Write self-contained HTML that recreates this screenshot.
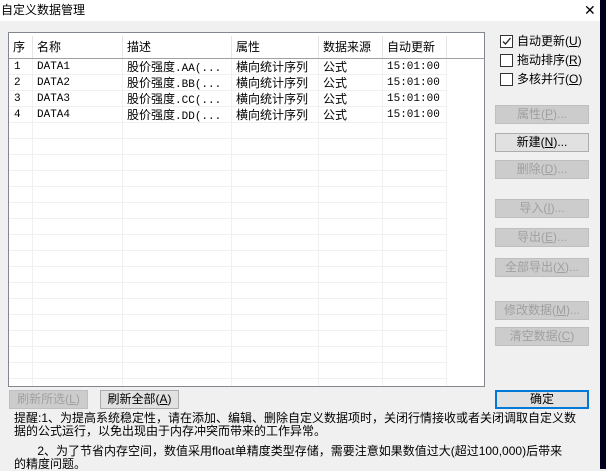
<!DOCTYPE html>
<html><head><meta charset="utf-8"><style>
*{margin:0;padding:0;box-sizing:border-box}
body{width:606px;height:469px;overflow:hidden;background:#f0f0f0;font-family:"Liberation Sans","Noto Sans CJK SC",sans-serif;font-size:12px;color:#000;position:relative}
.abs{position:absolute}
.title{left:0;top:0;width:600px;height:21px;background:#fff}
.title span{position:absolute;left:1px;top:1px;font-size:12px}
.strip{left:600px;top:0;width:6px;height:469px;background:#00001e}
.list{left:8px;top:32px;width:477px;height:355px;background:#fff;border:1px solid #828790;overflow:hidden}
.hline{position:absolute;left:0;width:438px;height:1px;background:#f0f0f0}
.vline{position:absolute;top:0;width:1px;height:354px;background:#f0f0f0}
.hdr{position:absolute;top:3px;height:22px;background:#fff;border-right:1px solid #e5e5e5;padding-left:4px;line-height:22px}
.r{position:absolute;left:0;width:438px;height:16px;line-height:16px;white-space:nowrap}
.r span{position:absolute;top:0;height:16px;overflow:hidden}
.mono{font-family:"Liberation Mono",monospace;font-size:11px}
.btn{position:absolute;height:19px;border:1px solid #adadad;background:#e1e1e1;text-align:center;line-height:17px;white-space:nowrap}
.dis{color:#a0a0a0;background:#cccccc;border-color:#bfbfbf}
.cb{position:absolute;left:500px;width:13px;height:13px;border:1px solid #333;background:#fff}
.cbl{position:absolute;left:517px;line-height:14px}
.note{position:absolute;left:14px;white-space:nowrap;line-height:13px;font-size:12px}
</style></head><body>
<div class="abs title"><span>自定义数据管理</span></div>
<div class="abs" style="left:584px;top:3px;font-size:14px;line-height:14px">✕</div>
<div class="abs strip"></div>
<div class="abs list">
 <div class="hdr" style="left:0;width:24px">序</div>
 <div class="hdr" style="left:24px;width:90px">名称</div>
 <div class="hdr" style="left:114px;width:109px">描述</div>
 <div class="hdr" style="left:223px;width:87px">属性</div>
 <div class="hdr" style="left:310px;width:64px">数据来源</div>
 <div class="hdr" style="left:374px;width:64px">自动更新</div>
 <div class="abs" style="left:0;top:25px;width:477px;height:1px;background:#a0a0a0"></div>
 <div class="hline" style="top:41px"></div><div class="hline" style="top:57px"></div><div class="hline" style="top:73px"></div><div class="hline" style="top:89px"></div><div class="hline" style="top:105px"></div><div class="hline" style="top:121px"></div><div class="hline" style="top:137px"></div><div class="hline" style="top:153px"></div><div class="hline" style="top:169px"></div><div class="hline" style="top:185px"></div><div class="hline" style="top:201px"></div><div class="hline" style="top:217px"></div><div class="hline" style="top:233px"></div><div class="hline" style="top:249px"></div><div class="hline" style="top:265px"></div><div class="hline" style="top:281px"></div><div class="hline" style="top:297px"></div><div class="hline" style="top:313px"></div><div class="hline" style="top:329px"></div><div class="hline" style="top:345px"></div>
 <div class="vline" style="left:23px;top:26px"></div><div class="vline" style="left:113px;top:26px"></div><div class="vline" style="left:222px;top:26px"></div><div class="vline" style="left:309px;top:26px"></div><div class="vline" style="left:373px;top:26px"></div><div class="vline" style="left:437px;top:26px"></div>
 <div class="r" style="top:26px"><span class="mono" style="left:5px">1</span><span class="mono" style="left:28px">DATA1</span><span style="left:118px">股价强度<span class="mono" style="position:static">.AA(...</span></span><span style="left:227px">横向统计序列</span><span style="left:314px">公式</span><span class="mono" style="left:378px">15:01:00</span></div>
 <div class="r" style="top:42px"><span class="mono" style="left:5px">2</span><span class="mono" style="left:28px">DATA2</span><span style="left:118px">股价强度<span class="mono" style="position:static">.BB(...</span></span><span style="left:227px">横向统计序列</span><span style="left:314px">公式</span><span class="mono" style="left:378px">15:01:00</span></div>
 <div class="r" style="top:58px"><span class="mono" style="left:5px">3</span><span class="mono" style="left:28px">DATA3</span><span style="left:118px">股价强度<span class="mono" style="position:static">.CC(...</span></span><span style="left:227px">横向统计序列</span><span style="left:314px">公式</span><span class="mono" style="left:378px">15:01:00</span></div>
 <div class="r" style="top:74px"><span class="mono" style="left:5px">4</span><span class="mono" style="left:28px">DATA4</span><span style="left:118px">股价强度<span class="mono" style="position:static">.DD(...</span></span><span style="left:227px">横向统计序列</span><span style="left:314px">公式</span><span class="mono" style="left:378px">15:01:00</span></div>
</div>
<div class="cb" style="top:35px"><svg width="11" height="11" style="position:absolute;left:0;top:0"><path d="M2 5.5 L4.5 8 L9.5 2" stroke="#222" stroke-width="1.3" fill="none"/></svg></div>
<div class="cbl" style="top:34px">自动更新(<u>U</u>)</div>
<div class="cb" style="top:54px"></div><div class="cbl" style="top:53px">拖动排序(<u>R</u>)</div>
<div class="cb" style="top:73px"></div><div class="cbl" style="top:72px">多核并行(<u>O</u>)</div>
<div class="btn dis" style="left:495px;top:105px;width:94px">属性(<u>P</u>)...</div>
<div class="btn" style="left:495px;top:133px;width:94px">新建(<u>N</u>)...</div>
<div class="btn dis" style="left:495px;top:160px;width:94px">删除(<u>D</u>)...</div>
<div class="btn dis" style="left:495px;top:199px;width:94px">导入(<u>I</u>)...</div>
<div class="btn dis" style="left:495px;top:228px;width:94px">导出(<u>E</u>)...</div>
<div class="btn dis" style="left:495px;top:258px;width:94px">全部导出(<u>X</u>)...</div>
<div class="btn dis" style="left:495px;top:301px;width:94px">修改数据(<u>M</u>)...</div>
<div class="btn dis" style="left:495px;top:327px;width:94px">清空数据(<u>C</u>)</div>
<div class="btn" style="left:495px;top:390px;width:94px;border:2px solid #0078d7;line-height:15px">确定</div>
<div class="btn dis" style="left:9px;top:390px;width:79px">刷新所选(<u>L</u>)</div>
<div class="btn" style="left:100px;top:390px;width:79px">刷新全部(<u>A</u>)</div>
<div class="note" style="top:412px">提醒:1、为提高系统稳定性，请在添加、编辑、删除自定义数据项时，关闭行情接收或者关闭调取自定义数</div>
<div class="note" style="top:425px">据的公式运行，以免出现由于内存冲突而带来的工作异常。</div>
<div class="note" style="top:445px">&nbsp;&nbsp;&nbsp;&nbsp;&nbsp;&nbsp;&nbsp;2、为了节省内存空间，数值采用float单精度类型存储，需要注意如果数值过大(超过100,000)后带来</div>
<div class="note" style="top:458px">的精度问题。</div>
</body></html>
